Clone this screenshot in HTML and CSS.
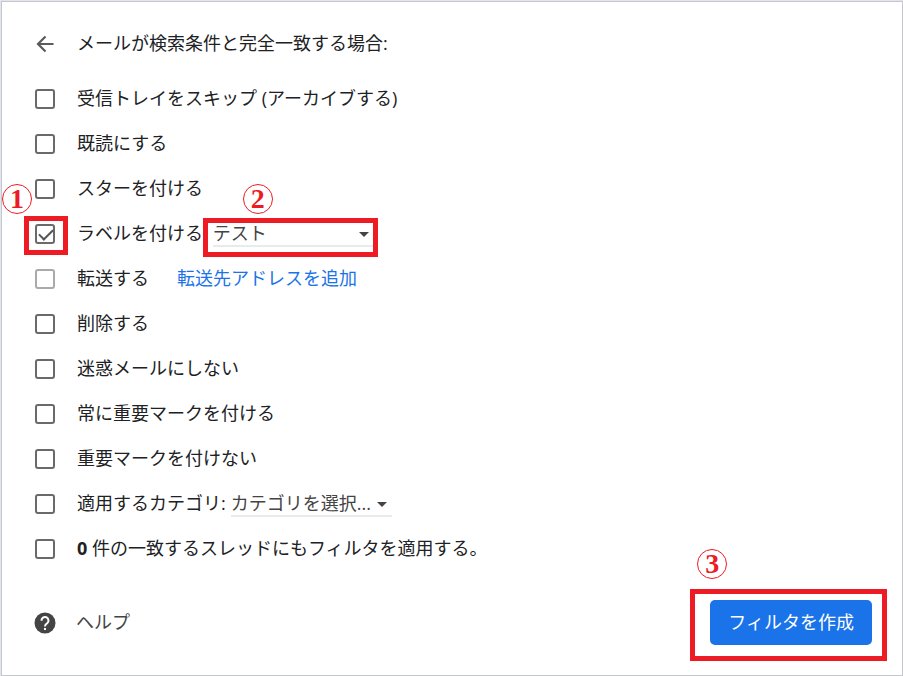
FILE: index.html
```html
<!DOCTYPE html>
<html lang="ja">
<head>
    <meta charset="UTF-8">
    <meta name="viewport" content="width=device-width, initial-scale=1.0">
    <title>フィルタを作成</title>
    <link rel="stylesheet" href="styles.css">
</head>
<body>

<form class="panel">
    <div class="row header">
        <button type="button" class="back" aria-label="戻る">
            <svg viewBox="0 0 20 20" width="20" height="20"><path d="M18.500 10H3.500M10.500 2.500L3 10l7.500 7.500" fill="none" stroke="#5b5b5b" stroke-width="2.200"/></svg>
        </button>
        <span class="title">メールが検索条件と完全一致する場合:</span>
    </div>

    <div class="row">
        <input type="checkbox" id="archive">
        <label for="archive">受信トレイをスキップ (アーカイブする)</label>
    </div>
    <div class="row">
        <input type="checkbox" id="read">
        <label for="read">既読にする</label>
    </div>
    <div class="row">
        <input type="checkbox" id="star">
        <label for="star">スターを付ける</label>
    </div>
    <div class="row">
        <span class="marked">
            <input type="checkbox" id="label" checked>
            <span class="frame frame-check"></span>
            <span class="step step-1">1</span>
        </span>
        <label for="label">ラベルを付ける:</label>
        <span class="dropdown">
            <select aria-label="ラベル"><option>テスト</option></select>
            <span class="frame frame-select"></span>
            <span class="step step-2">2</span>
        </span>
    </div>
    <div class="row">
        <input type="checkbox" id="forward" disabled>
        <label for="forward">転送する</label>
        <a href="#" class="add">転送先アドレスを追加</a>
    </div>
    <div class="row">
        <input type="checkbox" id="delete">
        <label for="delete">削除する</label>
    </div>
    <div class="row">
        <input type="checkbox" id="spam">
        <label for="spam">迷惑メールにしない</label>
    </div>
    <div class="row">
        <input type="checkbox" id="important">
        <label for="important">常に重要マークを付ける</label>
    </div>
    <div class="row">
        <input type="checkbox" id="unimportant">
        <label for="unimportant">重要マークを付けない</label>
    </div>
    <div class="row">
        <input type="checkbox" id="category">
        <label for="category">適用するカテゴリ:</label>
        <span class="dropdown">
            <select aria-label="カテゴリ"><option>カテゴリを選択...</option></select>
        </span>
    </div>
    <div class="row">
        <input type="checkbox" id="apply">
        <label for="apply"><b>0</b> 件の一致するスレッドにもフィルタを適用する。</label>
    </div>

    <div class="row footer">
        <svg class="help-icon" viewBox="0 0 22 22" width="22" height="22">
            <circle cx="11" cy="11" r="10.500" fill="#444"/>
            <path d="M7.500 8.700a3.500 3.500 0 1 1 5.700 2.500c-1.300 1-2.200 1.400-2.200 3.300" fill="none" stroke="#fff" stroke-width="2"/>
            <rect x="10" y="16" width="2" height="2" fill="#fff"/>
        </svg>
        <a href="#" class="help">ヘルプ</a>
        <span class="create">
            <button type="submit" class="submit">フィルタを作成</button>
            <span class="frame frame-submit"></span>
            <span class="step step-3">3</span>
        </span>
    </div>
</form>

</body>
</html>
```
FILE: styles.css
```css
* {
    box-sizing: border-box;
}
body {
    margin: 0;
    padding: 1px 0 0 1px;
    background-color: #e3e5ee;
    color: #202124;
    font-family: "Open Sans", "Noto Sans CJK JP", sans-serif;
    font-size: 18px;
    font-weight: 400;
    line-height: 24px;
}
.panel {
    min-height: calc(100vh - 1px);
    padding: 20px 30px 29px 33px;
    border: 1px solid #c6c7ca;
    background-color: #fff;
}
.row {
    display: flex;
    align-items: center;
    height: 45px;
    white-space: nowrap;
}
.row label,
.row a,
.title {
    padding-bottom: 2px;
}
.header {
    height: 44px;
    margin-bottom: 10px;
}
.back {
    display: flex;
    width: 20px;
    margin-right: 22px;
    padding: 0;
    border: none;
    background: none;
}
input[type="checkbox"] {
    appearance: none;
    display: block;
    flex: none;
    width: 20px;
    height: 20px;
    margin: 0 22px 0 0;
    border: 2px solid #6a6a6a;
    border-radius: 3px;
    background-color: #fff;
}
input[type="checkbox"]:disabled {
    border-color: #aaa;
}
input[type="checkbox"]:checked::after {
    content: "";
    display: block;
    width: 12px;
    height: 6px;
    margin: 3px 0 0 2px;
    border: solid #555;
    border-width: 0 0 2px 2px;
    transform: rotate(-45deg);
}
.marked,
.dropdown,
.create {
    position: relative;
}
.dropdown {
    width: 161px;
    margin-left: 5px;
}
.dropdown::after {
    content: "";
    position: absolute;
    top: 11px;
    right: 5px;
    border: 5px solid transparent;
    border-top-color: #444;
    border-bottom: none;
    pointer-events: none;
}
select {
    appearance: none;
    display: block;
    width: 100%;
    height: 26px;
    padding: 0;
    border: none;
    border-bottom: 2px solid #e8ebee;
    border-radius: 0;
    background: none;
    color: #444;
    font: inherit;
}
a {
    text-decoration: none;
}
.add {
    margin-left: 28px;
    color: #1a73e8;
}
.footer {
    margin-top: 29px;
}
.help-icon {
    margin: 0 20px 0 -1px;
}
.help {
    color: #444;
}
.create {
    margin-left: auto;
}
.submit {
    display: block;
    height: 45px;
    padding: 0 18px 2px;
    border: none;
    border-radius: 5px;
    background-color: #1a73e8;
    color: #fff;
    font: inherit;
    cursor: pointer;
}

/* numbered steps */
.frame {
    position: absolute;
    border: 5px solid #ed1c24;
    pointer-events: none;
}
.frame-check {
    top: -8px;
    left: -11px;
    width: 44px;
    height: 39px;
}
.frame-select {
    top: -3px;
    left: -10px;
    width: 175px;
    height: 39px;
}
.frame-submit {
    inset: -11px -15px -16px -20px;
}
.step {
    position: absolute;
    width: 30px;
    height: 30px;
    border: 1px solid #ed1c24;
    border-radius: 50%;
    color: #ed1c24;
    font-family: "Liberation Serif", serif;
    font-size: 28px;
    font-weight: bold;
    line-height: 28px;
    text-align: center;
}
.step-1 {
    top: -40px;
    left: -33px;
}
.step-2 {
    top: -37px;
    left: 30px;
}
.step-3 {
    top: -51px;
    left: -13px;
}
```
